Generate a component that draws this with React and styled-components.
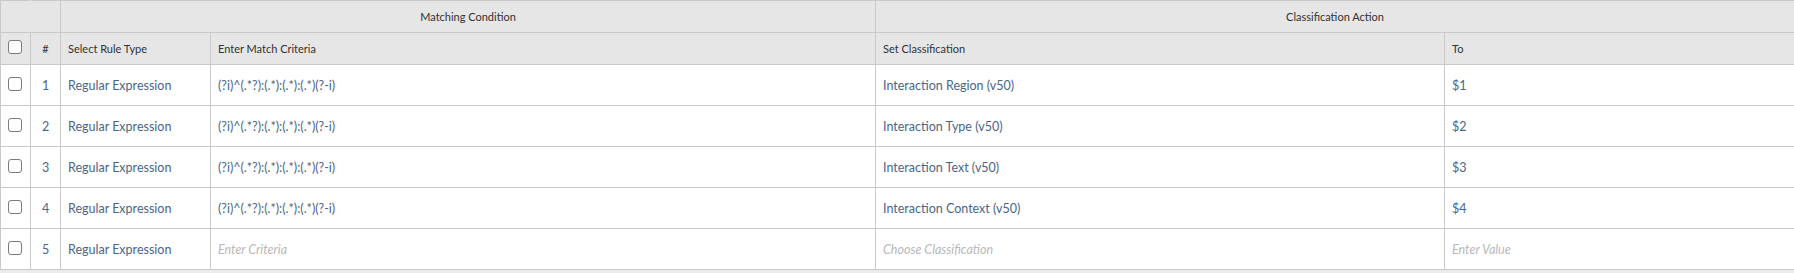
import React from "react";
import styled, { createGlobalStyle } from "styled-components";

const Global = createGlobalStyle`
  html, body { margin: 0; padding: 0; }
  body {
    background: #ececec;
    font-family: Lato, "Open Sans", sans-serif;
  }
`;

const Table = styled.table`
  border-collapse: collapse;
  table-layout: fixed;
  width: 1795px;
  background: #ffffff;
  font-size: 12.5px;
`;

const GroupCell = styled.th`
  height: 31px;
  padding: 0;
  background: #e6e6e6;
  border: 1px solid #c9c9c9;
  border-right-color: ${(p) => (p.$noRight ? "#e6e6e6" : "#c9c9c9")};
  font-weight: 400;
  font-size: 11px;
  color: #323232;
  text-align: center;
`;

const HeadCell = styled.th`
  height: 31px;
  padding: 0 7px;
  background: #e6e6e6;
  border: 1px solid #c9c9c9;
  font-weight: 400;
  font-size: 11px;
  color: #323232;
  text-align: ${(p) => (p.$center ? "center" : "left")};
  white-space: nowrap;
`;

const Cell = styled.td`
  height: 40px;
  padding: 0 7px;
  border: 1px solid #c9c9c9;
  color: #4a6588;
  text-align: ${(p) => (p.$center ? "center" : "left")};
  white-space: nowrap;
`;

const Placeholder = styled.span`
  font-style: italic;
  color: #b8b8b8;
`;

const Box = styled.span`
  display: inline-block;
  width: 12px;
  height: 12px;
  border: 1px solid #7b7b7b;
  border-radius: 3px;
  background: #fff;
  vertical-align: middle;
  position: relative;
  top: -2px;
`;

const CheckCell = styled(Cell)`
  padding: 0 0 0 7px;
`;

const CheckHead = styled(HeadCell)`
  padding: 0 0 0 7px;
`;

const rows = [
  { n: 1, crit: "(?i)^(.*?):(.*):(.*):(.*)(?-i)", cls: "Interaction Region (v50)", to: "$1" },
  { n: 2, crit: "(?i)^(.*?):(.*):(.*):(.*)(?-i)", cls: "Interaction Type (v50)", to: "$2" },
  { n: 3, crit: "(?i)^(.*?):(.*):(.*):(.*)(?-i)", cls: "Interaction Text (v50)", to: "$3" },
  { n: 4, crit: "(?i)^(.*?):(.*):(.*):(.*)(?-i)", cls: "Interaction Context (v50)", to: "$4" },
  { n: 5 },
];

export default function App() {
  return (
    <>
      <Global />
      <Table>
        <colgroup>
          <col style={{ width: 30 }} />
          <col style={{ width: 30 }} />
          <col style={{ width: 150 }} />
          <col style={{ width: 665 }} />
          <col style={{ width: 569 }} />
          <col />
        </colgroup>
        <thead>
          <tr>
            <GroupCell $noRight />
            <GroupCell />
            <GroupCell colSpan={2}>Matching Condition</GroupCell>
            <GroupCell colSpan={2}>Classification Action</GroupCell>
          </tr>
          <tr>
            <CheckHead><Box /></CheckHead>
            <HeadCell $center>#</HeadCell>
            <HeadCell>Select Rule Type</HeadCell>
            <HeadCell>Enter Match Criteria</HeadCell>
            <HeadCell>Set Classification</HeadCell>
            <HeadCell>To</HeadCell>
          </tr>
        </thead>
        <tbody>
          {rows.map((r) => (
            <tr key={r.n}>
              <CheckCell><Box /></CheckCell>
              <Cell $center>{r.n}</Cell>
              <Cell>Regular Expression</Cell>
              <Cell>{r.crit || <Placeholder>Enter Criteria</Placeholder>}</Cell>
              <Cell>{r.cls || <Placeholder>Choose Classification</Placeholder>}</Cell>
              <Cell>{r.to || <Placeholder>Enter Value</Placeholder>}</Cell>
            </tr>
          ))}
        </tbody>
      </Table>
    </>
  );
}
